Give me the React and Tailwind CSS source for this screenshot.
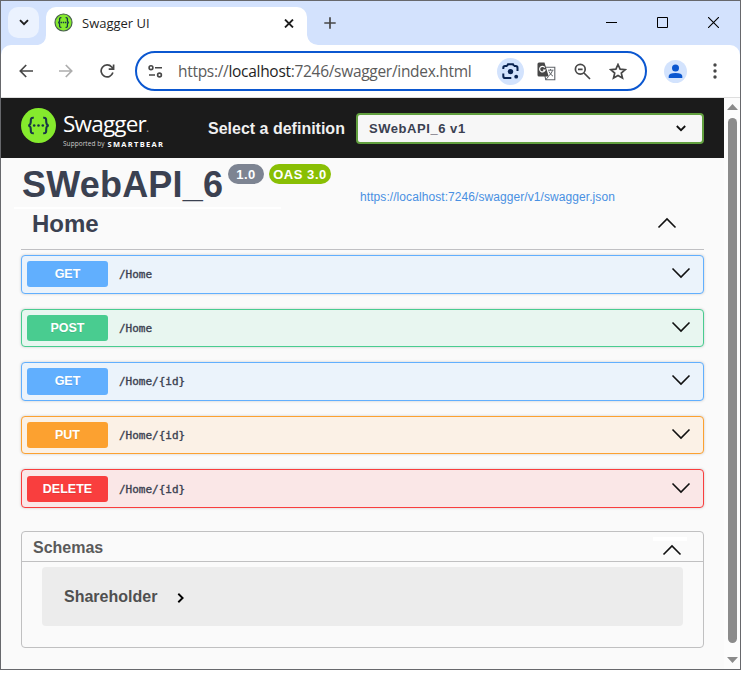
import React from "react";

const SANS = "font-['Liberation_Sans',Arial,sans-serif]";
const UI = "font-['Open_Sans','Noto_Sans',sans-serif]";

const OPERATIONS = [
  { method: "GET", path: "/Home", box: "h-[39px] mb-[15px] pt-[5px] border-[#61affe] bg-[#ebf3fb]", badge: "h-[26px] bg-[#61affe]" },
  { method: "POST", path: "/Home", box: "h-[38px] mb-[15px] pt-[5px] border-[#49cc90] bg-[#e8f6f0]", badge: "h-[26px] bg-[#49cc90]" },
  { method: "GET", path: "/Home/{id}", box: "h-[39px] mb-[15px] pt-[5px] border-[#61affe] bg-[#ebf3fb]", badge: "h-[27px] bg-[#61affe]" },
  { method: "PUT", path: "/Home/{id}", box: "h-[38px] mb-[15px] pt-[5px] border-[#fca130] bg-[#fbf1e6]", badge: "h-[26px] bg-[#fca130]" },
  { method: "DELETE", path: "/Home/{id}", box: "h-[39px] mb-[23px] pt-[6px] border-[#f93e3e] bg-[#fae7e7]", badge: "h-[26px] bg-[#f93e3e]" },
];

function Chevron({ up = false, className = "" }) {
  return (
    <svg className={className} width="20" height="12" viewBox="0 0 20 12" fill="none" stroke="#111" strokeWidth="1.6">
      <path d={up ? "M1.5 10.5 10 2l8.5 8.5" : "M1.5 1.5 10 10l8.5-8.5"} />
    </svg>
  );
}

function TabStrip() {
  return (
    <div className="flex h-[44px] bg-[#d3e2fd]">
      <div className="ml-[7px] mt-[6px] flex size-[31px] items-center justify-center rounded-[10px] bg-[#ebf2fe]">
        <svg width="10" height="7" viewBox="0 0 10 7" fill="none" stroke="#1f1f1f" strokeWidth="1.9">
          <path d="M1 1.2 5 5.2l4-4" />
        </svg>
      </div>
      <svg className="ml-[-1px] mt-[34px]" width="8" height="10" viewBox="0 0 8 10">
        <path d="M8 0v10H0Q8 8 8 0Z" fill="#fff" />
      </svg>
      <div className="mt-[6px] flex h-[38px] w-[261px] rounded-t-[10px] bg-white">
        <svg className="ml-[8px] mt-[6px]" width="19" height="19" viewBox="0 0 19 19" fill="none">
          <circle cx="9.5" cy="9.5" r="8.5" fill="#85ea2d" stroke="#49624d" strokeWidth="1.2" />
          <path d="M7.4 4.7C5.2 4.5 5.6 6 5.6 7.7c0 1.1-.4 1.8-1.5 1.8 1.1 0 1.5.7 1.5 1.8 0 1.7-.4 3.2 1.8 3M11.6 4.7c2.2-.2 1.8 1.3 1.8 3 0 1.1.4 1.8 1.5 1.8-1.1 0-1.5.7-1.5 1.8 0 1.7.4 3.2-1.8 3" stroke="#173647" strokeWidth="1.3" />
          <path d="M6.5 9.5h6" stroke="#173647" strokeWidth="1.3" strokeDasharray="1.5 .7" />
        </svg>
        <span className={`${UI} ml-[9px] mt-[7px] w-[202px] whitespace-nowrap text-[13px] leading-[19px] text-[#1f1f1f]`}>Swagger UI</span>
        <svg className="mt-[12px]" width="10" height="9" viewBox="0 0 10 9" stroke="#1f1f1f" strokeWidth="1.8">
          <path d="m1 .5 8 8M9 .5l-8 8" />
        </svg>
      </div>
      <svg className="mt-[34px]" width="11" height="10" viewBox="0 0 11 10">
        <path d="M0 0v10h11Q1 9 0 0Z" fill="#fff" />
      </svg>
      <svg className="ml-[6px] mt-[16px]" width="12" height="12" viewBox="0 0 12 12" stroke="#474747" strokeWidth="1.7">
        <path d="M6 .3v11.4M.3 6h11.4" />
      </svg>
      <svg className="ml-[270px] mt-[16px]" width="11" height="12" viewBox="0 0 11 12"><path d="M0 5.5h11" stroke="#000" /></svg>
      <svg className="ml-[40px] mt-[16px]" width="11" height="11" viewBox="0 0 11 11"><path d="M.5.5h10v10H.5z" fill="none" stroke="#000" /></svg>
      <svg className="ml-[40px] mt-[16px]" width="11" height="11" viewBox="0 0 11 11"><path d="m0 0 11 11M11 0 0 11" stroke="#000" strokeWidth="1.1" /></svg>
    </div>
  );
}

function Toolbar() {
  return (
    <div className="h-[53px] bg-[#d3e2fd]">
      <div className="flex h-[53px] items-center rounded-t-[10px] border-b border-[#dedede] bg-white">
        <svg className="ml-[18px]" width="15" height="14" viewBox="0 0 15 14" fill="none" stroke="#474747" strokeWidth="1.7">
          <path d="M14 7H2M7.2 1 1.3 7l5.9 6" />
        </svg>
        <svg className="ml-[24px]" width="15" height="14" viewBox="0 0 15 14" fill="none" stroke="#adadad" strokeWidth="1.7">
          <path d="M1 7h12M7.8 1l5.9 6-5.9 6" />
        </svg>
        <svg className="ml-[27px]" width="15" height="14" viewBox="0 0 15 14" fill="none" stroke="#474747" strokeWidth="1.7">
          <path d="M12.9 8.6A6 6 0 1 1 11.7 3l1.5 1.8M13.6.5v4.7H8.7" />
        </svg>
        <div className="ml-[20px] flex h-[40px] w-[512px] items-center rounded-full border-2 border-[#0b57d0] bg-white">
          <svg className="ml-[11px]" width="15" height="13" viewBox="0 0 15 13" fill="none" stroke="#474747" strokeWidth="1.6">
            <circle cx="3" cy="2.7" r="1.9" /><path d="M7 2.7h7M1 10h6" /><circle cx="11.5" cy="10" r="1.9" />
          </svg>
          <span className={`${UI} ml-[15px] w-[319px] whitespace-nowrap text-[15.5px] leading-[22px] tracking-[-0.3px] text-[#5b5b5b]`}>
            https://<span className="text-[#1f1f1f]">localhost</span>:7246/swagger/index.html
          </span>
          <div className="flex size-[27px] shrink-0 items-center justify-center rounded-full bg-[#d3e3fd]">
            <svg width="17" height="17" viewBox="0 0 17 17" fill="none" stroke="#0a2351" strokeWidth="2">
              <path d="M1.3 6V4.9q0-1.8 1.8-1.8H5M12 3.1h1.7q1.8 0 1.8 1.8V8M1.3 10.5v2.8q0 1.8 1.8 1.8h6.2M5 2.9 6 1.2h5l1 1.7" />
              <circle cx="8.5" cy="8.6" r="2.7" fill="#0a2351" stroke="none" /><circle cx="14.2" cy="13.7" r="1.9" fill="#0a2351" stroke="none" />
            </svg>
          </div>
          <svg className="ml-[13px] shrink-0" width="19" height="19" viewBox="0 0 19 19">
            <path d="M6 5.2h11.8v12.6H8.8Z" fill="#fff" stroke="#5f6368" strokeWidth="1.1" />
            <path d="M2 .5h5.5l4.2 14H2Q.5 14.5.5 13V2Q.5.5 2 .5Z" fill="#474747" />
            <path d="M7.8 5.6a2.8 2.8 0 1 0 .3 2.5H5.9" fill="none" stroke="#fff" strokeWidth="1.2" />
            <path d="M11 8.2h5.5M13.5 7v1.2M15.5 8.5q-1 3.8-4 5.5M12 9.5q1.5 3.2 4 4.7M8.5 18l3-3.5" fill="none" stroke="#5f6368" />
          </svg>
          <svg className="ml-[18px] shrink-0" width="17" height="17" viewBox="0 0 17 17" fill="none" stroke="#474747" strokeWidth="1.7">
            <circle cx="6.3" cy="6.3" r="4.9" /><path d="m10 10 6 6M4 6.3h4.6" />
          </svg>
          <svg className="ml-[18px] shrink-0" width="18" height="17" viewBox="0 0 18 17" fill="none" stroke="#474747" strokeWidth="1.7">
            <path d="m9 1.5 2.1 4.7 5.1.5-3.9 3.4 1.2 5L9 12.5l-4.500 2.600 1.200-5L1.800 6.700l5.100-.5Z" />
          </svg>
        </div>
        <div className="ml-[17px] flex size-[23px] items-center justify-center rounded-full bg-[#d3e3fd]">
          <svg width="15" height="15" viewBox="0 0 15 15" fill="#0b57d0">
            <circle cx="7.5" cy="4" r="3.5" /><path d="M.7 14v-2Q1 9 7.500 9t6.800 3v2Z" />
          </svg>
        </div>
        <svg className="ml-[26px]" width="4" height="16" viewBox="0 0 4 16" fill="#474747">
          <circle cx="2" cy="2" r="1.7" /><circle cx="2" cy="8" r="1.7" /><circle cx="2" cy="14" r="1.7" />
        </svg>
      </div>
    </div>
  );
}

function Header() {
  return (
    <header className="flex h-[60px] bg-[#1b1b1b]">
      <svg className="ml-[20px] mt-[10px]" width="35" height="35" viewBox="0 0 35 35" fill="none">
        <circle cx="17.5" cy="17.5" r="17.5" fill="#85ea2d" />
        <path d="M12.8 9.7c-3-.2-3 1.2-3 3.3 0 2.5.1 4.3-2.6 4.5 2.7.2 2.6 2 2.6 4.5 0 2.1 0 3.500 3 3.300M22.200 9.700c3-.2 3 1.200 3 3.300 0 2.500-.1 4.300 2.600 4.500-2.700.2-2.600 2-2.600 4.500 0 2.100 0 3.500-3 3.300" stroke="#173647" strokeWidth="2.1" />
        <g fill="#173647"><circle cx="13.2" cy="17.5" r="1.3" /><circle cx="17.5" cy="17.5" r="1.3" /><circle cx="21.8" cy="17.5" r="1.3" /></g>
      </svg>
      <div className={`${UI} ml-[7px] mt-[12px] w-[145px] whitespace-nowrap text-white`}>
        <div className="h-[29px] text-[22.5px] leading-[28px] tracking-[-0.8px]">Swagger<span className="text-[12px] text-[#999]">.</span></div>
        <div className="flex h-[10px] items-center leading-[10px]">
          <span className="text-[6.5px] tracking-[0.05px] text-[#ccc]">Supported by</span>
          <span className="ml-[3px] text-[7.5px] font-bold tracking-[1.3px]">SMARTBEAR</span>
        </div>
      </div>
      <span className={`${SANS} mt-[21px] w-[148px] whitespace-nowrap text-[16px] font-bold leading-[20px] text-[#f0f0f0]`}>Select a definition</span>
      <div className={`${SANS} mt-[15px] flex h-[31px] w-[348px] items-center justify-between rounded-[4px] border-2 border-[#62a03f] bg-[#f7f7f7] pl-[11px] pr-[16px] text-[13px] font-bold text-[#3b4151]`}>
        <span className="tracking-[0.55px]">SWebAPI_6 v1</span>
        <svg width="10" height="7" viewBox="0 0 10 7" fill="none" stroke="#111" strokeWidth="1.8"><path d="m.8 1 4.2 4.2L9.200 1" /></svg>
      </div>
    </header>
  );
}

function Operation({ method, path, box, badge }) {
  return (
    <div className={`flex rounded-[4px] border pl-[5px] shadow-[0_0_3px_rgba(0,0,0,0.19)] ${box}`}>
      <span className={`${SANS} flex w-[81px] items-center justify-center rounded-[3px] text-[12.5px] font-bold text-white [text-shadow:0_1px_0_rgba(0,0,0,0.1)] ${badge}`}>{method}</span>
      <span className="ml-[11px] mt-px flex h-[26px] flex-1 items-center font-['DejaVu_Sans_Mono',monospace] text-[11px] text-[#3b4151] [-webkit-text-stroke:0.35px_#3b4151]">{path}</span>
      <Chevron className="mr-[12px] mt-[6px]" />
    </div>
  );
}

function Schemas() {
  return (
    <section className={`${SANS} h-[117px] rounded-[4px] border border-[#c0c0c1]`}>
      <div className="flex h-[30px] justify-between border-b border-[#c0c0c1] pl-[11px] pr-[16px]">
        <span className="mt-[6px] text-[16px] font-bold leading-[20px] text-[#5a5a5a]">Schemas</span>
        <div className="flex w-[34px] flex-col items-center">
          <div className="mt-[5px] h-[4px] w-[34px] bg-white" />
          <Chevron up className="mr-[-4px] mt-[3px]" />
        </div>
      </div>
      <div className="mx-[20px] mt-[5px] flex h-[59px] rounded-[4px] bg-[#ececec] pl-[22px]">
        <span className="mt-[20px] text-[16px] font-bold leading-[20px] text-[#505050]">Shareholder</span>
        <svg className="ml-[20px] mt-[26px]" width="8" height="10" viewBox="0 0 8 10" fill="none" stroke="#000" strokeWidth="1.9"><path d="m1.3.8 4.3 4.2-4.3 4.200" /></svg>
      </div>
    </section>
  );
}

export default function App() {
  return (
    <div className="h-[674px] w-[744px] overflow-hidden bg-white">
      <div className="flex h-[670px] w-[741px] flex-col border border-[#67686c] bg-[#fafafa]">
        <TabStrip />
        <Toolbar />
        <div className="flex h-[571px]">
          <main className="w-[723px]">
            <Header />
            <div className={`${SANS} flex h-[49px] pl-[21px] text-[#3b4151]`}>
              <h1 className="mt-[5px] w-[206px] whitespace-nowrap text-[36px] font-bold leading-[44px] tracking-[0.2px]">SWebAPI_6</h1>
              <span className="mt-[6px] flex h-[20px] w-[36px] items-center justify-center rounded-full bg-[#7d8492] pt-px text-[13px] font-bold tracking-[0.5px] text-white">1.0</span>
              <span className="ml-[5px] mt-[6px] flex h-[20px] w-[62px] items-center justify-center whitespace-nowrap rounded-full bg-[#89bf04] pt-px text-[13px] font-bold tracking-[0.55px] text-white">OAS 3.0</span>
              <span className="ml-[29px] mt-[31px] whitespace-nowrap text-[12px] leading-[16px] tracking-[0.075px] text-[#4990e2]">https://localhost:7246/swagger/v1/swagger.json</span>
            </div>
            <div className="ml-[13px] h-[2px] w-[267px] bg-white" />
            <div className={`${SANS} mx-[20px] mb-[5px] flex h-[41px] justify-between border-b border-[#c0c0c3] pl-[11px] pr-[27px]`}>
              <h2 className="mt-[2px] text-[24px] font-bold leading-[26px] text-[#3b4151]">Home</h2>
              <Chevron up className="mt-[8px]" />
            </div>
            <div className="mx-[20px]">
              {OPERATIONS.map((op) => <Operation key={op.method + op.path} {...op} />)}
              <Schemas />
            </div>
          </main>
          <div className="flex w-[16px] flex-col items-center bg-[#fcfcfc]">
            <svg className="mt-[6px]" width="11" height="6" viewBox="0 0 11 6"><path d="M0 6 5.500 0 11 6Z" fill="#8b8b8b" /></svg>
            <div className="mt-[8px] h-[525px] w-[9px] rounded-full bg-[#8b8b8b]" />
            <svg className="mt-[14px]" width="11" height="6" viewBox="0 0 11 6"><path d="M0 0h11L5.500 6Z" fill="#8b8b8b" /></svg>
          </div>
        </div>
      </div>
    </div>
  );
}
